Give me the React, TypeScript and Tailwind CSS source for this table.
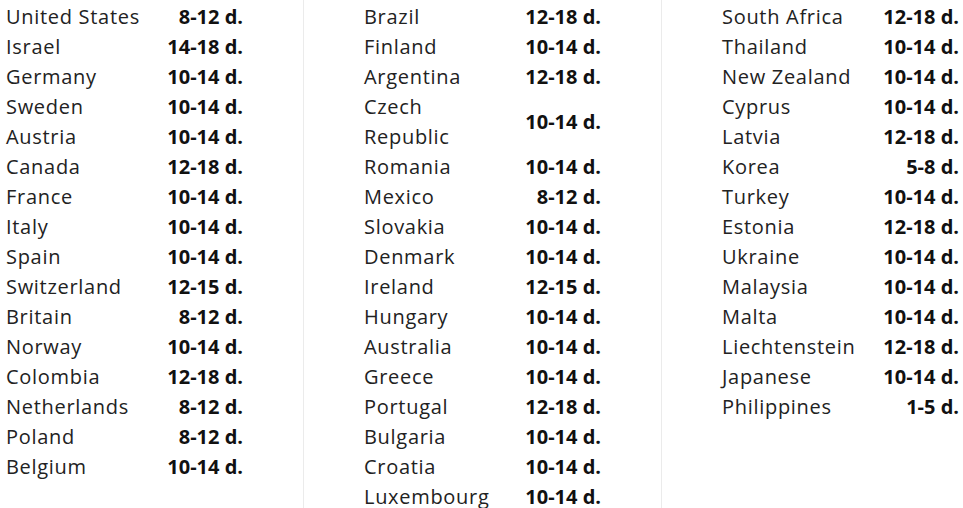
import React from "react";

type Row = [string, string];

const col1: Row[] = [
  ["United States", "8-12 d."],
  ["Israel", "14-18 d."],
  ["Germany", "10-14 d."],
  ["Sweden", "10-14 d."],
  ["Austria", "10-14 d."],
  ["Canada", "12-18 d."],
  ["France", "10-14 d."],
  ["Italy", "10-14 d."],
  ["Spain", "10-14 d."],
  ["Switzerland", "12-15 d."],
  ["Britain", "8-12 d."],
  ["Norway", "10-14 d."],
  ["Colombia", "12-18 d."],
  ["Netherlands", "8-12 d."],
  ["Poland", "8-12 d."],
  ["Belgium", "10-14 d."],
];

const col2: Row[] = [
  ["Brazil", "12-18 d."],
  ["Finland", "10-14 d."],
  ["Argentina", "12-18 d."],
  ["Czech Republic", "10-14 d."],
  ["Romania", "10-14 d."],
  ["Mexico", "8-12 d."],
  ["Slovakia", "10-14 d."],
  ["Denmark", "10-14 d."],
  ["Ireland", "12-15 d."],
  ["Hungary", "10-14 d."],
  ["Australia", "10-14 d."],
  ["Greece", "10-14 d."],
  ["Portugal", "12-18 d."],
  ["Bulgaria", "10-14 d."],
  ["Croatia", "10-14 d."],
  ["Luxembourg", "10-14 d."],
];

const col3: Row[] = [
  ["South Africa", "12-18 d."],
  ["Thailand", "10-14 d."],
  ["New Zealand", "10-14 d."],
  ["Cyprus", "10-14 d."],
  ["Latvia", "12-18 d."],
  ["Korea", "5-8 d."],
  ["Turkey", "10-14 d."],
  ["Estonia", "12-18 d."],
  ["Ukraine", "10-14 d."],
  ["Malaysia", "10-14 d."],
  ["Malta", "10-14 d."],
  ["Liechtenstein", "12-18 d."],
  ["Japanese", "10-14 d."],
  ["Philippines", "1-5 d."],
];

function Table({ rows }: { rows: Row[] }) {
  return (
    <div className="w-[237px] pt-[2px]">
      {rows.map(([c, v]) => (
        <div key={c} className="flex items-center">
          <div className="w-[140px] leading-[30px] tracking-[0.7px] text-[#222222]">{c}</div>
          <div className="flex-1 text-right leading-[30px] font-bold text-[#111111]">{v}</div>
        </div>
      ))}
    </div>
  );
}

export default function App() {
  return (
    <div
      className="flex h-[508px] w-[963px] bg-white text-[20px] overflow-hidden"
      style={{ fontFamily: '"Open Sans", sans-serif' }}
    >
      <div className="w-[304px] border-r border-[#ebebeb] pl-[6px]">
        <Table rows={col1} />
      </div>
      <div className="w-[358px] border-r border-[#ebebeb] pl-[60px]">
        <Table rows={col2} />
      </div>
      <div className="flex-1 pl-[60px]">
        <Table rows={col3} />
      </div>
    </div>
  );
}
